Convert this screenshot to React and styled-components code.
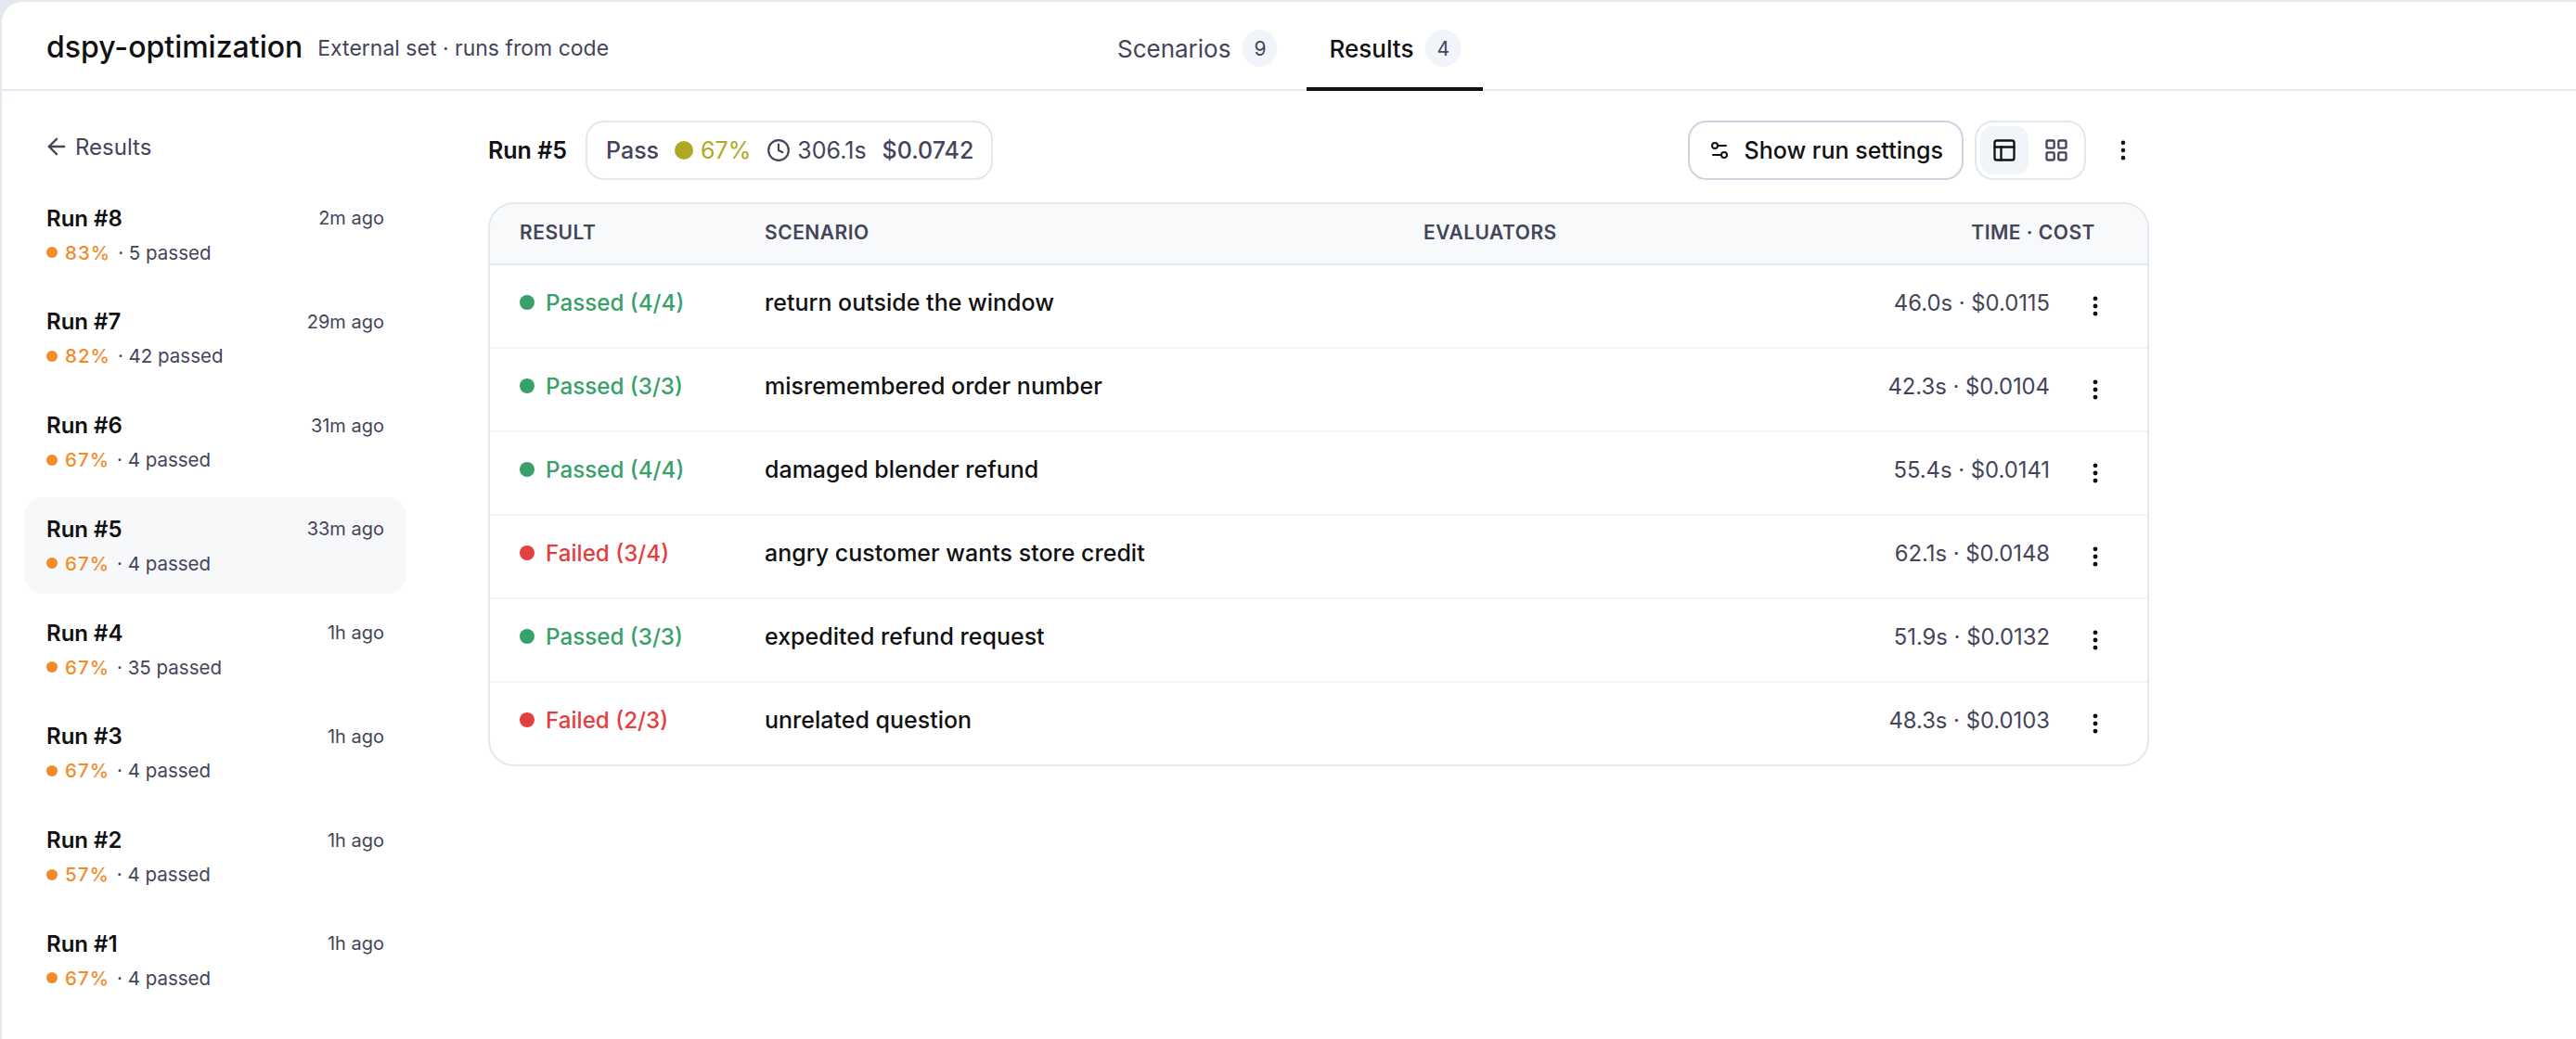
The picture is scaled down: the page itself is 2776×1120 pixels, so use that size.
import styled, { createGlobalStyle } from "styled-components";
import {
  ArrowLeft,
  Clock,
  EllipsisVertical,
  LayoutGrid,
  PanelsTopLeft,
  Settings2,
} from "lucide-react";

const runs = [
  { id: 8, ago: "2m ago", pct: 83, passed: 5 },
  { id: 7, ago: "29m ago", pct: 82, passed: 42 },
  { id: 6, ago: "31m ago", pct: 67, passed: 4 },
  { id: 5, ago: "33m ago", pct: 67, passed: 4, active: true },
  { id: 4, ago: "1h ago", pct: 67, passed: 35 },
  { id: 3, ago: "1h ago", pct: 67, passed: 4 },
  { id: 2, ago: "1h ago", pct: 57, passed: 4 },
  { id: 1, ago: "1h ago", pct: 67, passed: 4 },
];

const results = [
  { ok: true, score: "4/4", name: "return outside the window", meta: "46.0s · $0.0115" },
  { ok: true, score: "3/3", name: "misremembered order number", meta: "42.3s · $0.0104" },
  { ok: true, score: "4/4", name: "damaged blender refund", meta: "55.4s · $0.0141" },
  { ok: false, score: "3/4", name: "angry customer wants store credit", meta: "62.1s · $0.0148" },
  { ok: true, score: "3/3", name: "expedited refund request", meta: "51.9s · $0.0132" },
  { ok: false, score: "2/3", name: "unrelated question", meta: "48.3s · $0.0103" },
];

const App = () => {
  return (
    <>
      <GlobalStyle />
      <Frame>
        <Page>
          <Header>
            <TitleBox>
              <Title>dspy-optimization</Title>
              <Subtitle>External set · runs from code</Subtitle>
            </TitleBox>
            <Tabs>
              <Tab>
                Scenarios <Count>9</Count>
              </Tab>
              <Tab active>
                Results <Count>4</Count>
              </Tab>
            </Tabs>
          </Header>
          <Body>
            <SideBar>
              <BackLink>
                <ArrowLeft size={28} strokeWidth={2} />
                Results
              </BackLink>
              <RunList>
                {runs.map((run) => (
                  <RunItem key={run.id} active={run.active}>
                    <RunTop>
                      <RunName>Run #{run.id}</RunName>
                      <RunAgo>{run.ago}</RunAgo>
                    </RunTop>
                    <RunSub>
                      <SmallDot />
                      <RunPct>{run.pct}%</RunPct>
                      <span>· {run.passed} passed</span>
                    </RunSub>
                  </RunItem>
                ))}
              </RunList>
            </SideBar>
            <Main>
              <TopBar>
                <RunLabel>Run #5</RunLabel>
                <Summary>
                  <span>Pass</span>
                  <SummaryScore>
                    <ScoreDot />
                    67%
                  </SummaryScore>
                  <SummaryTime>
                    <Clock size={26} strokeWidth={2} />
                    306.1s
                  </SummaryTime>
                  <span>$0.0742</span>
                </Summary>
                <Actions>
                  <SettingsBtn>
                    <Settings2 size={24} strokeWidth={2} />
                    Show run settings
                  </SettingsBtn>
                  <ViewSwitch>
                    <ViewBtn active>
                      <PanelsTopLeft size={28} strokeWidth={2} />
                    </ViewBtn>
                    <ViewBtn>
                      <LayoutGrid size={28} strokeWidth={2} />
                    </ViewBtn>
                  </ViewSwitch>
                  <MoreBtn>
                    <EllipsisVertical size={28} strokeWidth={2} />
                  </MoreBtn>
                </Actions>
              </TopBar>
              <Table>
                <HeadRow>
                  <span>RESULT</span>
                  <span>SCENARIO</span>
                  <span>EVALUATORS</span>
                  <span>TIME · COST</span>
                </HeadRow>
                {results.map((row) => (
                  <Row key={row.name}>
                    <Status ok={row.ok}>
                      <StatusDot ok={row.ok} />
                      {row.ok ? "Passed" : "Failed"} ({row.score})
                    </Status>
                    <Scenario>{row.name}</Scenario>
                    <Meta>{row.meta}</Meta>
                    <RowMore>
                      <EllipsisVertical size={28} strokeWidth={2.2} />
                    </RowMore>
                  </Row>
                ))}
              </Table>
            </Main>
          </Body>
        </Page>
      </Frame>
    </>
  );
};

export default App;

const GlobalStyle = createGlobalStyle`
  html, body {
    margin: 0;
    padding: 0;
    height: 100%;
    background: #fff;
  }
  * {
    box-sizing: border-box;
  }
  body {
    font-family: Inter, "Liberation Sans", sans-serif;
    color: #111113;
  }
`;

const Frame = styled.div`
  height: 1120px;
  padding: 2px 0 0 2px;
  background: #e2e7f0;
  overflow: hidden;
`;
const Page = styled.div`
  height: 100%;
  background: #fff;
  border-top-left-radius: 22px;
`;
const Header = styled.div`
  position: relative;
  display: flex;
  justify-content: center;
  height: 96px;
  border-bottom: 2px solid #e2e7f0;
`;
const TitleBox = styled.div`
  position: absolute;
  left: 48px;
  top: 0;
  bottom: 0;
  display: flex;
  align-items: center;
  gap: 16px;
  padding-top: 2px;
`;
const Title = styled.div`
  font-size: 32px;
  font-weight: 500;
`;
const Subtitle = styled.div`
  font-size: 23px;
  color: #44445a;
  padding-top: 3px;
`;
const Tabs = styled.div`
  display: flex;
  gap: 8px;
  height: 96px;
`;
const Tab = styled.div`
  display: flex;
  align-items: center;
  gap: 13px;
  padding: 8px 24px 0;
  font-size: 26px;
  font-weight: ${({ active }) => (active ? 500 : 400)};
  color: ${({ active }) => (active ? "#111113" : "#44445a")};
  border-bottom: 4px solid ${({ active }) => (active ? "#111113" : "transparent")};
`;
const Count = styled.span`
  display: flex;
  align-items: center;
  justify-content: center;
  height: 40px;
  padding: 0 12px;
  border-radius: 20px;
  background: #f1f4f9;
  color: #44445a;
  font-size: 21px;
  font-weight: 400;
`;
const Body = styled.div`
  display: flex;
`;
const SideBar = styled.div`
  width: 524px;
  flex-shrink: 0;
  padding: 40px 0 0 24px;
`;
const BackLink = styled.div`
  display: flex;
  align-items: center;
  gap: 6px;
  height: 40px;
  padding-left: 21px;
  margin-bottom: 23px;
  font-size: 24px;
  color: #44445a;
`;
const RunList = styled.div`
  display: flex;
  flex-direction: column;
  gap: 7.75px;
  width: 412px;
`;
const RunItem = styled.div`
  height: 104px;
  padding: 20px 24px 0;
  border-radius: 20px;
  background: ${({ active }) => (active ? "#f7f8fa" : "transparent")};
`;
const RunTop = styled.div`
  display: flex;
  align-items: center;
  justify-content: space-between;
  height: 28px;
`;
const RunName = styled.span`
  font-size: 24px;
  font-weight: 600;
`;
const RunAgo = styled.span`
  font-size: 20px;
  color: #44445a;
`;
const RunSub = styled.div`
  display: flex;
  align-items: center;
  gap: 8px;
  height: 28px;
  margin-top: 9px;
  font-size: 20.5px;
  color: #44445a;
`;
const SmallDot = styled.span`
  width: 12px;
  height: 12px;
  border-radius: 50%;
  background: #f28c28;
`;
const RunPct = styled.span`
  color: #f28c28;
  font-weight: 500;
  letter-spacing: 1px;
`;
const Main = styled.div`
  width: 1790px;
  padding-top: 32px;
`;
const TopBar = styled.div`
  display: flex;
  align-items: center;
  height: 64px;
  margin-bottom: 24px;
`;
const RunLabel = styled.span`
  font-size: 25px;
  font-weight: 600;
  margin-right: 20px;
`;
const Summary = styled.div`
  display: flex;
  align-items: center;
  gap: 17px;
  height: 64px;
  padding: 0 19px 0 20px;
  border: 2px solid #e2e7f0;
  border-radius: 20px;
  font-size: 25px;
  font-weight: 500;
  color: #44445a;
`;
const SummaryScore = styled.span`
  display: flex;
  align-items: center;
  gap: 8px;
  font-weight: 400;
  color: #b0a823;
`;
const ScoreDot = styled.span`
  width: 20px;
  height: 20px;
  border-radius: 50%;
  background: #b0a823;
`;
const SummaryTime = styled.span`
  display: flex;
  align-items: center;
  gap: 7px;
  font-weight: 400;
`;
const Actions = styled.div`
  display: flex;
  align-items: center;
  gap: 12px;
  margin-left: auto;
`;
const SettingsBtn = styled.div`
  display: flex;
  align-items: center;
  gap: 15px;
  height: 64px;
  padding: 0 20px;
  border: 2px solid #cbd5e1;
  border-radius: 20px;
  font-size: 25px;
  font-weight: 500;
`;
const ViewSwitch = styled.div`
  display: flex;
  align-items: center;
  gap: 4px;
  height: 64px;
  padding: 0 4px;
  border: 2px solid #e2e7f0;
  border-radius: 20px;
`;
const ViewBtn = styled.div`
  display: flex;
  align-items: center;
  justify-content: center;
  width: 52px;
  height: 52px;
  border-radius: 14px;
  background: ${({ active }) => (active ? "#f1f4f9" : "transparent")};
  color: ${({ active }) => (active ? "#111113" : "#44445a")};
`;
const MoreBtn = styled.div`
  display: flex;
  align-items: center;
  justify-content: center;
  width: 56px;
  height: 56px;
`;
const Table = styled.div`
  border: 2px solid #e2e7f0;
  border-radius: 28px;
  overflow: hidden;
`;
const HeadRow = styled.div`
  display: grid;
  grid-template-columns: 264px 710px 1fr auto;
  align-items: center;
  height: 66px;
  padding: 0 56px 3px 32px;
  background: #f8f9fb;
  border-bottom: 2px solid #e2e7f0;
  font-size: 21px;
  font-weight: 600;
  letter-spacing: 0.5px;
  color: #44445a;
`;
const Row = styled.div`
  display: grid;
  grid-template-columns: 264px 710px 1fr 105px;
  align-items: center;
  height: 90px;
  padding: 0 0 0 32px;
  border-bottom: 2px solid #f1f4f9;
  &:last-child {
    height: 88px;
    border-bottom: 0;
  }
`;
const Status = styled.span`
  display: flex;
  align-items: center;
  gap: 12px;
  font-size: 24.2px;
  font-weight: 500;
  padding-bottom: 8px;
  color: ${({ ok }) => (ok ? "#38a169" : "#e53e3e")};
`;
const StatusDot = styled.span`
  width: 16px;
  height: 16px;
  border-radius: 50%;
  background: ${({ ok }) => (ok ? "#38a169" : "#e53e3e")};
`;
const Scenario = styled.span`
  font-size: 25px;
  font-weight: 450;
  padding-bottom: 9px;
`;
const Meta = styled.span`
  font-size: 23.8px;
  color: #44445a;
  text-align: right;
  padding-bottom: 8px;
`;
const RowMore = styled.span`
  display: flex;
  padding-left: 35px;
`;
